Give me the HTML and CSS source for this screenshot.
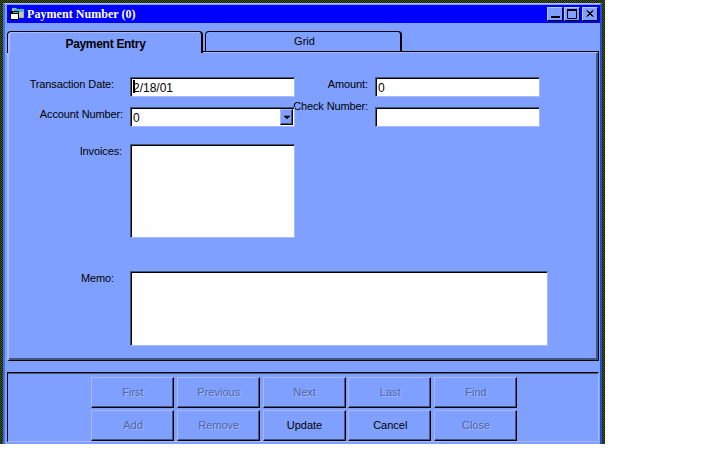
FILE: index.html
```html
<!DOCTYPE html>
<html lang="en">
<head>
<meta charset="utf-8">
<title>Payment Number (0)</title>
<link rel="stylesheet" href="styles.css">
</head>
<body>
<div class="window">
  <div class="frame">
    <header class="titlebar">
      <svg class="app-icon" width="16" height="16" viewBox="0 0 16 16">
        <path d="M3 2h4l1 1h7v9H3z" fill="#c8c8c8" stroke="#505050" stroke-width=".5"/>
        <path d="M5 3h9v3H5z" fill="#30c0c8"/>
        <path d="M1.500 5.500h8v8h-8z" fill="#fff" stroke="#000"/>
        <path d="M1 5h9v3H1z" fill="#000"/>
        <path d="M4 6h5v1H4z" fill="#30c0c8"/>
      </svg>
      <span class="title">Payment Number (0)</span>
      <div class="winbtns">
        <div class="winbtn"><svg width="14" height="12" viewBox="0 0 14 12"><path d="M3 8h9v2H3z" fill="#000"/></svg></div>
        <div class="winbtn"><svg width="14" height="12" viewBox="0 0 14 12"><path d="M2.500 1.500h9v9h-9z" fill="none" stroke="#000"/><path d="M2 1h10v2H2z" fill="#000"/></svg></div>
        <div class="winbtn winbtn-close"><svg width="14" height="12" viewBox="0 0 14 12"><path d="M3.500 2.500l6 6M4.500 2.500l6 6M9.500 2.500l-6 6M10.500 2.500l-6 6" stroke="#000" fill="none"/></svg></div>
      </div>
    </header>
    <div class="tabs">
      <div class="tab tab-active">Payment Entry</div>
      <div class="tab tab-grid">Grid</div>
    </div>
    <main class="panel">
      <div class="form-top">
        <label class="lbl lbl-date">Transaction Date:</label>
        <div class="field">2/18/01<span class="caret"></span></div>
        <label class="lbl lbl-amount">Amount:</label>
        <div class="field">0</div>
        <label class="lbl lbl-account">Account Number:</label>
        <div class="field">0<span class="combo-btn"><svg width="8" height="5" viewBox="0 0 8 5"><path d="M1 1h6L4 4z" fill="#000" stroke="#000" stroke-width=".6"/></svg></span></div>
        <label class="lbl lbl-check">Check Number:</label>
        <div class="field"></div>
      </div>
      <div class="form-row invoices-row">
        <label class="lbl lbl-invoices">Invoices:</label>
        <div class="field field-invoices"></div>
      </div>
      <div class="form-row memo-row">
        <label class="lbl lbl-memo">Memo:</label>
        <div class="field field-memo"></div>
      </div>
    </main>
    <footer class="toolbar">
      <button class="btn" disabled>First</button>
      <button class="btn" disabled>Previous</button>
      <button class="btn" disabled>Next</button>
      <button class="btn" disabled>Last</button>
      <button class="btn" disabled>Find</button>
      <button class="btn" disabled>Add</button>
      <button class="btn" disabled>Remove</button>
      <button class="btn">Update</button>
      <button class="btn">Cancel</button>
      <button class="btn" disabled>Close</button>
    </footer>
  </div>
</div>
</body>
</html>
```
FILE: styles.css
```css
* { box-sizing: border-box; }
html, body { margin: 0; padding: 0; background: #fff; }
body { font-family: "Liberation Sans", Arial, sans-serif; font-size: 11px; color: #000; }
.window {
  width: 605px;
  height: 444px;
  padding: 3px 3px 0 3px;
  background: repeating-conic-gradient(#4a5a10 0 25%, #101808 0 50%) 0 0 / 2px 2px;
}
.frame {
  height: 441px;
  background: #80a0ff;
  border-left: 2px solid #3a70e8;
  border-right: 2px solid #1a50d0;
  border-top: 1px solid #a8c0ff;
  padding: 1px 0 0 2px;
  display: flex;
  flex-direction: column;
}
.titlebar {
  width: 593px;
  height: 18px;
  background: #0000ff;
  color: #fff;
  display: flex;
  align-items: center;
  padding: 0 2px;
  flex: none;
}
.app-icon { margin-right: 2px; flex: none; }
.title {
  font-family: "Liberation Serif", serif;
  font-weight: bold;
  font-size: 12px;
  letter-spacing: .05px;
}
.winbtns { margin-left: auto; display: flex; }
.winbtn {
  width: 16px;
  height: 14px;
  background: #80a0ff;
  border: 1px solid;
  border-color: #b8c8ff #000 #000 #b8c8ff;
  display: flex;
  margin-left: 1px;
  overflow: hidden;
}
.winbtn-close { margin-left: 2px; }
.tabs {
  display: flex;
  margin-top: 8px;
  height: 20px;
  flex: none;
  gap: 1px;
  position: relative;
  z-index: 1;
}
.tab {
  width: 197px;
  height: 20px;
  border: 1px solid #000;
  border-bottom: 0;
  border-right-width: 2px;
  border-radius: 4px 4px 0 0;
  text-align: center;
  font-size: 11px;
}
.tab-active {
  width: 196px;
  height: 22px;
  border-left-width: 1px;
  font-weight: bold;
  font-size: 12px;
  letter-spacing: -.3px;
  background: #80a0ff;
  box-shadow: inset 2px 1px 0 #a8b8ff;
  padding: 5px 0 0 2px;
}
.tab-grid { margin-left: 1px; padding: 3px 0 0 3px; }
.panel {
  width: 592px;
  height: 310px;
  flex: none;
  border-top: 1px solid #000;
  border-right: 1px solid #000;
  border-bottom: 1px solid #000;
  border-left: 2px solid #a8b8ff;
  box-shadow: inset 0 1px 0 #a8b8ff, inset -2px -2px 0 #405880;
  padding-top: 25px;
}
.form-top {
  display: grid;
  grid-template-columns: 121px 165px 80px 165px;
  grid-template-rows: 20px 20px;
  row-gap: 10px;
}
.form-row { display: grid; grid-template-columns: 121px auto; justify-content: start; }
.invoices-row { margin-top: 17px; }
.memo-row { margin-top: 33px; }
.lbl { text-align: right; font-size: 11px; letter-spacing: -.12px; line-height: 14px; white-space: nowrap; }
.lbl-date { padding-right: 16px; }
.lbl-amount { padding-right: 7px; }
.lbl-account { padding-right: 7px; }
.lbl-check { padding-right: 7px; margin: -8px 0 0 -2px; }
.lbl-invoices { padding-right: 8px; }
.lbl-memo { padding-right: 16px; }
.field {
  position: relative;
  background: #fff;
  border: 1px solid;
  border-color: #405880 #a8b8ff #a8b8ff #405880;
  box-shadow: inset 1px 1px 0 #000;
  padding: 2px 0 0 2px;
  font-size: 12px;
  line-height: 16px;
  height: 20px;
  width: 165px;
}
.caret {
  position: absolute;
  left: 2px;
  top: 2px;
  width: 2px;
  height: 13px;
  background: #000;
}
.combo-btn {
  position: absolute;
  right: 1px;
  top: 1px;
  width: 13px;
  height: 16px;
  background: #80a0ff;
  border: 1px solid;
  border-color: #a8b8ff #000 #000 #a8b8ff;
  box-shadow: inset -1px -1px 0 #405880;
  display: flex;
  align-items: center;
  justify-content: center;
}
.field-invoices { height: 94px; }
.field-memo { width: 418px; height: 75px; }
.toolbar {
  width: 592px;
  height: 70px;
  margin-top: 11px;
  flex: none;
  border-top: 1px solid #000;
  border-left: 1px solid #000;
  border-right: 1px solid #a8b8ff;
  border-bottom: 1px solid #a8b8ff;
  box-shadow: inset 0 1px 0 #405880;
  padding: 4px 0 0 83px;
  display: grid;
  grid-template-columns: repeat(5, 83px);
  grid-auto-rows: 31px;
  column-gap: 2.75px;
  row-gap: 2px;
  align-content: start;
}
.btn {
  font: 11px "Liberation Sans", Arial, sans-serif;
  color: #000;
  background: #80a0ff;
  padding: 0 0 2px 1px;
  border: 1px solid;
  border-color: #a8b8ff #000 #000 #a8b8ff;
  box-shadow: inset -1px -1px 0 #405880;
}
.btn:disabled { color: #50689f; text-shadow: 1px 1px 0 #a8b8ff; }
```
